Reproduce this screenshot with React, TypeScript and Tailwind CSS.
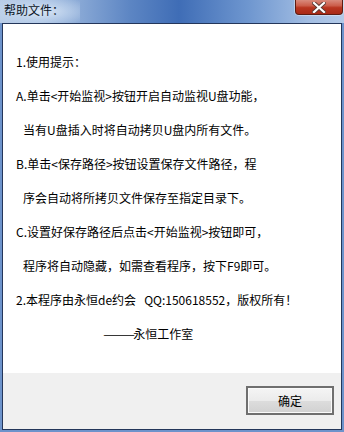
export default function App() {
  const lines: { text: string; indent?: boolean }[] = [
    { text: "1.使用提示：" },
    { text: "A.单击<开始监视>按钮开启自动监视U盘功能，" },
    { text: "当有U盘插入时将自动拷贝U盘内所有文件。", indent: true },
    { text: "B.单击<保存路径>按钮设置保存文件路径，程" },
    { text: "序会自动将所拷贝文件保存至指定目录下。", indent: true },
    { text: "C.设置好保存路径后点击<开始监视>按钮即可，" },
    { text: "程序将自动隐藏，如需查看程序，按下F9即可。", indent: true },
    { text: "2.本程序由永恒de约会\u00a0\u00a0\u00a0QQ:150618552，版权所有！" },
  ];

  return (
    <div
      className="w-[344px] h-[432px] flex flex-col bg-[#6d93cb] text-black"
      style={{ fontFamily: '"Noto Sans CJK SC", "Noto Sans", sans-serif' }}
    >
      {/* title bar */}
      <div className="relative h-[23px] flex items-start bg-[linear-gradient(90deg,#b7cbe6_0%,#a9c2e3_12%,#5c85c3_38%,#3f6db6_52%,#6e96cf_72%,#a3bee3_90%,#b3cae8_100%)]">
        <div className="absolute left-0 top-0 w-[80px] h-[23px] bg-[radial-gradient(ellipse_at_center,rgba(220,232,246,0.95)_0%,rgba(200,218,240,0.6)_50%,rgba(180,205,235,0)_100%)]" />
        <span className="relative ml-[4px] mt-[2px] text-[12px] leading-[16px] text-[#0b1626]">帮助文件：</span>
        {/* close button */}
        <div className="absolute right-[1px] top-0 w-[48px] h-[15px] rounded-b-[4px] border border-t-0 border-[#5e1c12] bg-[linear-gradient(180deg,#d98a7c_0%,#cc5e4b_40%,#b93520_55%,#a92a16_100%)] flex items-center justify-center shadow-[0_0_0_1px_rgba(255,255,255,0.35)]">
          <svg width="14" height="11" viewBox="0 0 14 11">
            <path d="M2 1 L12 10 M12 1 L2 10" stroke="#5a3a35" strokeWidth="4" strokeLinecap="square" />
            <path d="M2 1 L12 10 M12 1 L2 10" stroke="#ffffff" strokeWidth="2.2" strokeLinecap="square" />
          </svg>
        </div>
      </div>

      {/* client area */}
      <div className="flex-1 mx-[2px] mb-[2px] border border-[#24365a] flex flex-col">
        <div className="flex-1 bg-white pt-[21px] pl-[13px]">
          {lines.map((l, i) => (
            <div
              key={i}
              className={"text-[12px] leading-[34px] whitespace-nowrap " + (l.indent ? "pl-[7px]" : "")}
            >
              {l.text}
            </div>
          ))}
          <div className="text-[12px] leading-[34px] whitespace-nowrap pl-[87px]">
            <span className="inline-block origin-left scale-x-[1.6] mr-[10px]">——</span>永恒工作室
          </div>
        </div>
        <div className="h-[56px] bg-[#f0f0f0] flex justify-end items-start pt-[13px] pr-[7px]">
          <div className="w-[88px] h-[29px] border-2 border-[#6f6f6f] bg-[#8a8a8a]">
            <div className="w-full h-full border border-[#fafafa] bg-[linear-gradient(180deg,#f4f4f4_0%,#ebebeb_50%,#dddddd_51%,#d2d2d2_100%)] flex items-center justify-center text-[12px]">
              确定
            </div>
          </div>
        </div>
      </div>
    </div>
  );
}
